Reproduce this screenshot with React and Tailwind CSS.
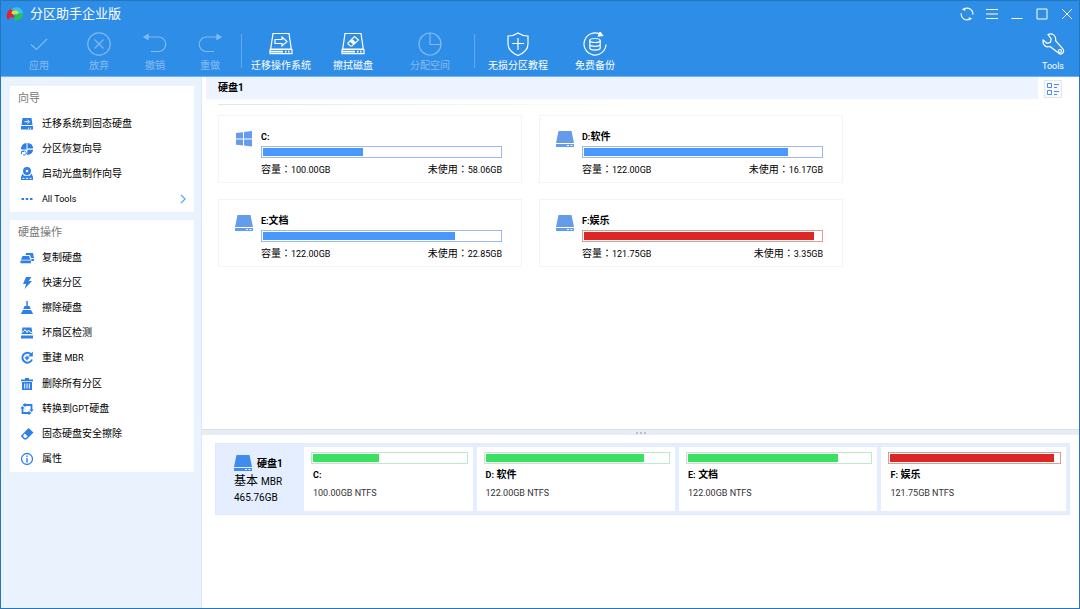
import clsx from "clsx";

const Latin = ({ children }) => <span className="text-[9px]">{children}</span>;

// Full-width colon, centred in its cell
const Colon = () => <span className="font-['Noto_Sans_CJK_TC',sans-serif]" lang="zh-TW">：</span>;

/* ---------- icons ---------- */

function Line({ size = 24, className, children }) {
    return (
        <svg
            width={size}
            height={size}
            viewBox="0 0 24 24"
            fill="none"
            stroke="currentColor"
            strokeWidth="1.2"
            className={className}
            aria-hidden="true"
        >
            {children}
        </svg>
    );
}

function Solid({ children }) {
    return (
        <svg width="14" height="14" viewBox="0 0 14 14" fill="currentColor" className="shrink-0" aria-hidden="true">
            {children}
        </svg>
    );
}

const diskFrame = (
    <>
        <path d="M4 1.5h16l2.3 15.5H1.7z" />
        <path d="M1 17.5h22v4.2H1z" />
        <path d="M1 19.6h13M16 19.6h1.5M19 19.6h1.5" strokeWidth="1.6" />
    </>
);

const toolIcons = {
    apply: <path d="M4 12.5l5.5 5L20 7" />,
    discard: (
        <>
            <circle cx="12" cy="12" r="11.2" />
            <path d="M7.5 7.5l9 9M16.5 7.5l-9 9" />
        </>
    ),
    undo: (
        <>
            <path d="M4 5h11.5a7.2 7.2 0 0 1 0 14.5H8" />
            <path d="M1 5l4-2.5v5z" fill="currentColor" />
        </>
    ),
    redo: (
        <>
            <path d="M20 5H8.5a7.2 7.2 0 0 0 0 14.5H16" />
            <path d="M23 5l-4-2.5v5z" fill="currentColor" />
        </>
    ),
    migrate: (
        <>
            {diskFrame}
            <path d="M6 7.500h7V5l5 4.500-5 4.500v-2.500H6z" />
        </>
    ),
    wipe: (
        <>
            {diskFrame}
            <path d="M7 11l6.500-6.500L17.500 8 11 14H9.500L7 12z" />
            <path d="M11 8l3 2.500" />
            <path d="M11 8l3 2.500-1.500 1.500-3-2.500z" fill="currentColor" />
        </>
    ),
    allocate: (
        <>
            <circle cx="12" cy="12" r="11" />
            <path d="M12 1v11.5h11" />
        </>
    ),
    shield: (
        <>
            <path d="M12 1c3 2 6 3 10 3v8c0 5.5-4 9-10 11.5C6 21 2 17.5 2 12V4c4 0 7-1 10-3z" />
            <path d="M12 6v12M6 11.5h12" />
        </>
    ),
    backup: (
        <>
            <path d="M17 2.200A11 11 0 1 0 23 12.500" />
            <path d="M17 0l2.500 3.500-4 .5z" fill="currentColor" />
            <ellipse cx="12" cy="8.500" rx="5.200" ry="2" />
            <path d="M6.800 8.500v7.500c0 2.700 10.400 2.700 10.400 0V8.500M6.800 12.300c0 2.700 10.400 2.700 10.400 0" />
        </>
    ),
    wrench: (
        <>
            <path d="M7 2.500c4-2 8.500 1 7.500 6l7.500 8.500c2 3.500-2 6.500-4.500 4L9 14.500c-4 1.500-8-2-6.800-6.500l3.800 3.300 3.500-1 .7-3.500z" />
            <circle cx="19" cy="19" r="1.500" />
        </>
    ),
};

const sideIcons = {
    migrate: (
        <>
            <path d="M2.500 1h9l1 7h-11z" />
            <path d="M1 9h12v3.500H1z" />
            <path d="M4.500 4.700h4M7.500 2.700l2 2-2 2" stroke="#fff" fill="none" />
            <path d="M8 11.200h1M10 11.200h1" stroke="#fff" />
        </>
    ),
    recover: (
        <>
            <path d="M6.500 1v6.500H1A6 6 0 0 1 6.500 1z" />
            <path d="M7.500 1a6 6 0 0 1 5.700 5.500H7.500z" />
            <path d="M13.200 7.700A6 6 0 0 1 7 13l.5-5.300z" />
            <path d="M1.500 12V9.500H4M1.800 9.800c2-2 5-.5 4.300 2.200-.5 1-1.500 1.300-3 .8" fill="none" stroke="currentColor" />
        </>
    ),
    boot: (
        <>
            <path fillRule="evenodd" d="M7 0a4 4 0 1 1 0 8 4 4 0 0 1 0-8zm0 2.700a1.300 1.300 0 1 0 0 2.600 1.300 1.300 0 0 0 0-2.600z" />
            <path d="M2.500 6.500L4 8.700h6l1.500-2.200L13 10v3H1v-3z" />
            <path d="M2.500 11.300h2M6 11.300h2M9.500 11.300h2" stroke="#fff" />
        </>
    ),
    dots: <path d="M1.500 6H4v2H1.500zM5.700 6h2.500v2H5.700zM10 6h2.500v2H10z" />,
    copy: (
        <>
            <path d="M6 2h7l1 5h-3L10 4H5.500zM11 8h3v2h-2.500z" />
            <path d="M2.500 5H9l1.500 3.700H1zM.5 9.500H11v2.800H.5z" />
        </>
    ),
    bolt: <path d="M6 1h5.500L8.700 5H12l-7.500 8L6.200 8H3z" />,
    broom: <path d="M6.300 0h1.500v5h1.700l1.200 3H3.300l1.200-3h1.800zM3 9h8l2.200 4H.8z" />,
    sector: (
        <>
            <path d="M2.500 1.500h9l1 6.500h-11zM1 9.500h12v3H1z" />
            <path d="M1 7l2.500-1.500L5 3.500l2 3L8.500 4 10 6l3 1" fill="none" stroke="#fff" />
        </>
    ),
    rebuild: (
        <>
            <path d="M11 3.200A5 5 0 1 0 12 8.500" fill="none" stroke="currentColor" strokeWidth="2" />
            <path d="M12.800.5v5H8z" />
            <path d="M7 4.800v4.400M4.800 7h4.400" stroke="currentColor" strokeWidth="1.5" />
        </>
    ),
    trash: (
        <>
            <path d="M5 1h4v1.500h4v1.700H1V2.500h4zM2 5h10v8H2z" />
            <path d="M4.700 6.500v5M7 6.500v5M9.300 6.500v5" stroke="#fff" />
        </>
    ),
    convert: (
        <>
            <path d="M5 3h6.500v5.500M9 11H2.500V5.500" fill="none" stroke="currentColor" strokeWidth="1.8" />
            <path d="M5.500.8v4.400L2.500 3zM8.500 8.800v4.400l3-2.200zM9.300 7.500h4.400l-2.200 2.500zM.3 6.500h4.400L2.500 4z" />
        </>
    ),
    eraser: (
        <>
            <path d="M8.500 1L13.500 5.500l-7 7H4L.8 9z" />
            <path d="M4.700 6.500l3 2.800-1.800 1.700H4.600L3 9z" fill="#fff" />
        </>
    ),
    info: (
        <>
            <circle cx="7" cy="7" r="5.500" fill="none" stroke="currentColor" strokeWidth="1.300" />
            <path d="M6.300 3.500h1.400V5H6.300zM6.300 6h1.400v4.500H6.300z" />
        </>
    ),
};

function Logo() {
    return (
        <svg width="18" height="16" viewBox="0 0 18 16" aria-hidden="true">
            <path d="M1 8C2 2 8 2 10 4L7 9l2 3-4-1-3 3C1 12 0 11 1 8z" fill="#df2430" />
            <path d="M5 3.500c4-4 11-3 12 3.500l-5 1-4-3z" fill="#35c3ee" />
            <path d="M17 7c1 5-4 7-8 8l-1-3 2-3z" fill="#24c455" />
            <ellipse cx="9" cy="6.500" rx="3.500" ry="2" fill="#c7e642" />
        </svg>
    );
}

function DiskIcon({ strong }) {
    return (
        <svg
            width="18"
            height="16"
            viewBox="0 0 18 16"
            className={clsx("shrink-0", strong ? "text-[#3f8bee]" : "text-[#649bea]")}
            aria-hidden="true"
        >
            <path d="M2.500 0h13L18 12H0z" fill="currentColor" />
            <path d="M0 13h18v3H0z" fill="currentColor" />
            <path d="M11 14.500h2M14.500 14.500h2" stroke="#fff" />
        </svg>
    );
}

function WindowsIcon() {
    return (
        <svg width="18" height="16" viewBox="0 0 18 16" fill="#649bea" className="shrink-0" aria-hidden="true">
            <path d="M1 2L8 1.200v6.300H1zM9 1L17 0v7.500H9zM1 8.500h7v6L1 13.800zM9 8.500h8v7l-8-.9z" />
        </svg>
    );
}

/* ---------- data ---------- */

const tools = [
    { label: "应用", icon: "apply", width: "w-[60px]", disabled: true },
    { label: "放弃", icon: "discard", width: "w-[60px]", disabled: true },
    { label: "撤销", icon: "undo", width: "w-[52px]", disabled: true },
    { label: "重做", icon: "redo", width: "w-[58px]", disabled: true },
    null,
    { label: "迁移操作系统", icon: "migrate", width: "w-[74px]" },
    { label: "擦拭磁盘", icon: "wipe", width: "w-[70px]" },
    { label: "分配空间", icon: "allocate", width: "w-[84px]", disabled: true },
    null,
    { label: "无损分区教程", icon: "shield", width: "w-[82px]" },
    { label: "免费备份", icon: "backup", width: "w-[72px]" },
];

const wizards = [
    { label: "迁移系统到固态硬盘", icon: "migrate" },
    { label: "分区恢复向导", icon: "recover" },
    { label: "启动光盘制作向导", icon: "boot" },
    { label: <Latin>All Tools</Latin>, icon: "dots", more: true },
];

const operations = [
    { label: "复制硬盘", icon: "copy" },
    { label: "快速分区", icon: "bolt" },
    { label: "擦除硬盘", icon: "broom" },
    { label: "坏扇区检测", icon: "sector" },
    { label: <>重建 <Latin>MBR</Latin></>, icon: "rebuild" },
    { label: "删除所有分区", icon: "trash" },
    { label: <>转换到<Latin>GPT</Latin>硬盘</>, icon: "convert" },
    { label: "固态硬盘安全擦除", icon: "eraser" },
    { label: "属性", icon: "info" },
];

const partitions = [
    { letter: "C:", name: "", size: "100.00GB", free: "58.06GB", used: 42, mapUsed: 43, grow: "grow-[157]", system: true },
    { letter: "D:", name: "软件", size: "122.00GB", free: "16.17GB", used: 86, mapUsed: 87, grow: "grow-[187]" },
    { letter: "E:", name: "文档", size: "122.00GB", free: "22.85GB", used: 81, mapUsed: 82, grow: "grow-[187]" },
    { letter: "F:", name: "娱乐", size: "121.75GB", free: "3.35GB", used: 97, mapUsed: 97, grow: "grow-[173]", full: true },
];

/* ---------- parts ---------- */

function ToolButton({ tool }) {
    return (
        <button
            type="button"
            disabled={tool.disabled}
            className={clsx(
                "flex flex-col items-center gap-[2px] whitespace-nowrap text-[10px] leading-[16px] text-white",
                tool.width,
                tool.disabled && "opacity-40"
            )}
        >
            <Line>{toolIcons[tool.icon]}</Line>
            {tool.label}
        </button>
    );
}

function Header() {
    const control = "flex h-[24px] w-[25px] items-center justify-center";
    return (
        <header className="border-b border-[#70b3f2] bg-[#2e8de7] text-white">
            <div className="flex h-[26px] items-center justify-between">
                <h1 className="flex items-center gap-[6px] pl-[5px] text-[13px] leading-[20px]">
                    <Logo />
                    分区助手企业版
                </h1>
                <div className="flex">
                    <button type="button" aria-label="刷新" className={control}>
                        <Line size={14} className="stroke-2">
                            <path d="M7 3.300A10 10 0 0 1 22 13M17 20.700A10 10 0 0 1 2 11" />
                            <path d="M3 4l6-3v6zM21 20l-6 3v-6z" fill="currentColor" strokeWidth="0" />
                        </Line>
                    </button>
                    <button type="button" aria-label="菜单" className={control}>
                        <Line size={12} className="stroke-2">
                            <path d="M0 3h24M0 12h24M0 21h24" />
                        </Line>
                    </button>
                    <button type="button" aria-label="最小化" className={control}>
                        <Line size={12} className="stroke-2">
                            <path d="M1 21h22" />
                        </Line>
                    </button>
                    <button type="button" aria-label="最大化" className={control}>
                        <Line size={12} className="stroke-2">
                            <path d="M2 2h20v20H2z" />
                        </Line>
                    </button>
                    <button type="button" aria-label="关闭" className={control}>
                        <Line size={12} className="stroke-2">
                            <path d="M2 2l20 20M22 2L2 22" />
                        </Line>
                    </button>
                </div>
            </div>
            <div className="flex items-start pb-[2px] pl-[8px] pt-[5px]">
                {tools.map((tool, i) =>
                    tool ? (
                        <ToolButton key={tool.label} tool={tool} />
                    ) : (
                        <span key={i} className="mx-[2px] mt-[2px] h-[34px] w-px bg-[#63abf0]" />
                    )
                )}
                <button
                    type="button"
                    className="ml-auto flex w-[52px] flex-col items-center gap-[2px] text-[10px] leading-[16px]"
                >
                    <Line>{toolIcons.wrench}</Line>
                    <Latin>Tools</Latin>
                </button>
            </div>
        </header>
    );
}

function SidePanel({ title, items, listHeight }) {
    return (
        <section className="bg-white">
            <h2 className="pl-[8px] text-[11px] leading-[25px] text-[#777]">{title}</h2>
            <ul className={clsx("flex flex-col", listHeight)}>
                {items.map((item) => (
                    <li key={item.icon} className="flex flex-1">
                        <button
                            type="button"
                            className="flex flex-1 items-center gap-[8px] pl-[10px] pr-[6px] text-left text-[10px] leading-[16px]"
                        >
                            <span className="text-[#2f7fe8]">
                                <Solid>{sideIcons[item.icon]}</Solid>
                            </span>
                            <span>{item.label}</span>
                            {item.more && (
                                <Line size={10} className="ml-auto stroke-3 text-[#58a6ef]">
                                    <path d="M7 2l10 10L7 22" />
                                </Line>
                            )}
                        </button>
                    </li>
                ))}
            </ul>
        </section>
    );
}

function UsageBar({ value, color }) {
    const colors = {
        blue: ["border-[#9dbbe8]", "bg-[#4b98fc]"],
        green: ["border-[#bdebc7]", "bg-[#3be062]"],
        red: ["border-[#e59a90]", "bg-[#dc2727]"],
    };
    const [border, fill] = colors[color];
    return (
        <div className={clsx("h-[12px] border bg-white p-px", border)}>
            <div className={clsx("h-full", fill)} style={{ width: `${value}%` }} />
        </div>
    );
}

function PartitionCard({ part }) {
    return (
        <article className="flex h-[68px] w-[304px] gap-[8px] border border-[#f3f4f6] pl-[16px] pr-[19px] pt-[12px]">
            <div className="pt-[3px]">{part.system ? <WindowsIcon /> : <DiskIcon />}</div>
            <div className="flex-1">
                <h3 className="text-[10px] font-bold leading-[18px]">
                    <Latin>{part.letter}</Latin>
                    {part.name}
                </h3>
                <UsageBar value={part.used} color={part.full ? "red" : "blue"} />
                <p className="flex justify-between pt-[2px] text-[10px] leading-[18px]">
                    <span>容量<Colon /><Latin>{part.size}</Latin></span>
                    <span>未使用<Colon /><Latin>{part.free}</Latin></span>
                </p>
            </div>
        </article>
    );
}

function DiskMap() {
    return (
        <section className="flex gap-[4px] border border-[#dfeafa] bg-[#e4eefe] p-[3px]">
            <div className="w-[81px] shrink-0 pl-[15px] pt-[5px]">
                <div className="flex items-center gap-[5px] text-[10px] font-bold leading-[18px]">
                    <DiskIcon strong />
                    <span className="whitespace-nowrap pt-[3px]">硬盘1</span>
                </div>
                <p className="whitespace-nowrap text-[12px] leading-[16px]">
                    基本 <span className="text-[10px]">MBR</span>
                </p>
                <p className="text-[10px] leading-[16px]">465.76GB</p>
            </div>
            {partitions.map((part) => (
                <article
                    key={part.letter}
                    className={clsx("h-[64px] basis-0 bg-white pl-[7px] pr-[5px] pt-[5px]", part.grow)}
                >
                    <UsageBar value={part.mapUsed} color={part.full ? "red" : "green"} />
                    <h3 className="pl-[2px] pt-[2px] text-[10px] font-bold leading-[18px]">
                        <Latin>{part.letter}</Latin> {part.name}
                    </h3>
                    <p className="pl-[2px] text-[10px] leading-[18px] text-[#333]">
                        <Latin>{part.size} NTFS</Latin>
                    </p>
                </article>
            ))}
        </section>
    );
}

export default function App() {
    return (
        <div className="flex min-h-screen flex-col border border-[#2277bd] bg-white font-[Roboto,'Noto_Sans_CJK_SC',sans-serif] text-black">
            <Header />
            <div className="flex flex-1">
                <aside className="flex w-[201px] shrink-0 flex-col gap-[8px] border-r border-[#dde8f6] bg-[#eaf2fe] pl-[9px] pr-[7px] pt-[9px]">
                    <SidePanel title="向导" items={wizards} listHeight="h-[101px]" />
                    <SidePanel title="硬盘操作" items={operations} listHeight="h-[227px]" />
                </aside>
                <main className="flex min-w-0 flex-1 flex-col">
                    <div className="grow">
                        <div className="flex items-start gap-[6px] pl-[4px] pr-[17px]">
                            <h2 className="flex-1 bg-[#edf4ff] pl-[12px] text-[10px] font-bold leading-[22px]">
                                硬盘1
                            </h2>
                            <button
                                type="button"
                                aria-label="切换视图"
                                className="mt-[3px] flex size-[18px] items-center justify-center border border-[#e0e7f0] bg-[#f8fafd] text-[#4c8be8]"
                            >
                                <svg width="12" height="12" viewBox="0 0 12 12" fill="none" stroke="currentColor" aria-hidden="true">
                                    <path d="M.5.5h4v4h-4zM.5 7.500h4v4h-4zM7 1.500h5M7 4.500h3M7 8.500h5M7 11.500h3" />
                                </svg>
                            </button>
                        </div>
                        <div className="ml-[16px] mt-[5px] h-px w-1/2 bg-linear-to-r from-[#dfe5ee] to-white" />
                        <div className="flex flex-wrap gap-x-[17px] gap-y-[16px] pl-[16px] pt-[10px]">
                            {partitions.map((part) => (
                                <PartitionCard key={part.letter} part={part} />
                            ))}
                        </div>
                    </div>
                    <div
                        role="separator"
                        className="flex h-[6px] items-center justify-center gap-[2px] border-t border-[#d8e2ee] bg-[#e6edf5]"
                    >
                        <span className="size-[2px] bg-[#b5c2d5]" />
                        <span className="size-[2px] bg-[#b5c2d5]" />
                        <span className="size-[2px] bg-[#b5c2d5]" />
                    </div>
                    <div className="min-h-[173px] pl-[13px] pr-[9px] pt-[8px]">
                        <DiskMap />
                    </div>
                </main>
            </div>
        </div>
    );
}
